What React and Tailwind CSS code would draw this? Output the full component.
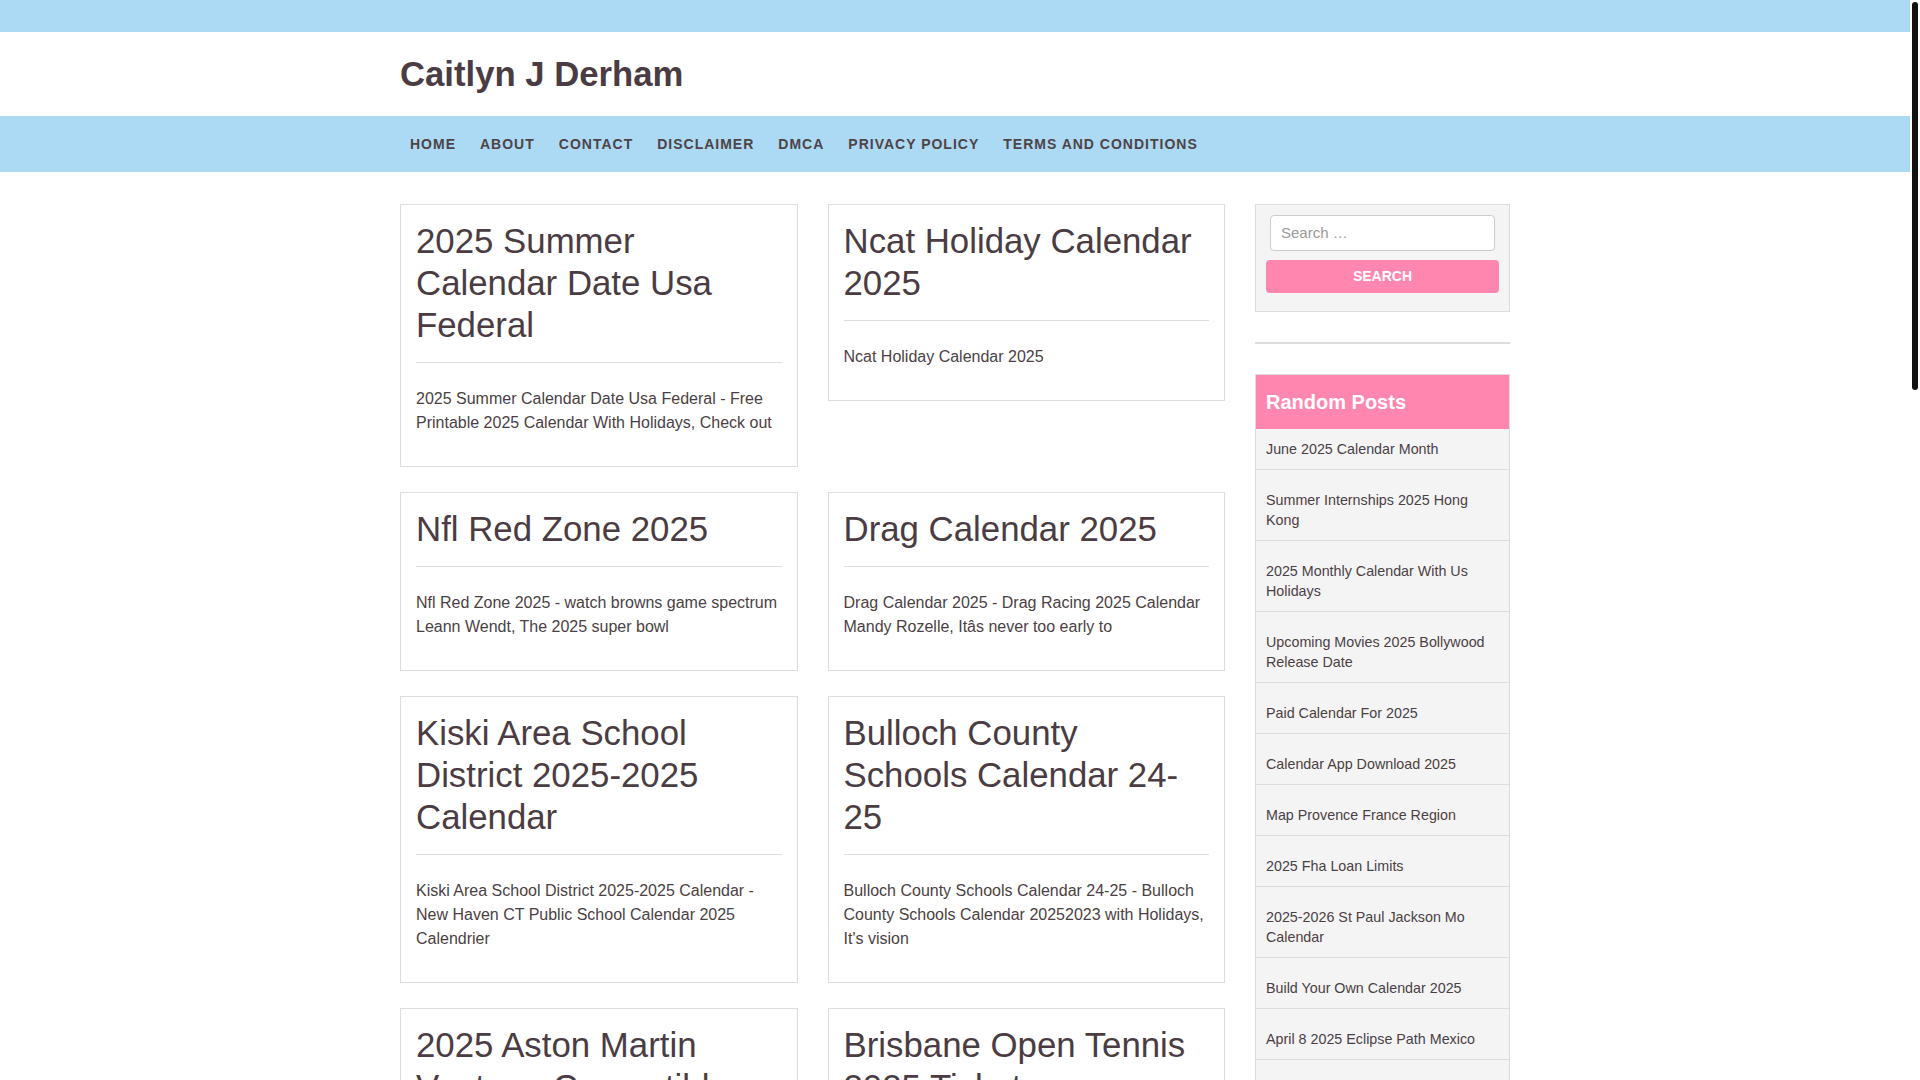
import React from "react";

const posts = [
  {
    t: "2025 Summer Calendar Date Usa Federal",
    e: "2025 Summer Calendar Date Usa Federal - Free Printable 2025 Calendar With Holidays, Check out",
  },
  { t: "Ncat Holiday Calendar 2025", e: "Ncat Holiday Calendar 2025" },
  {
    t: "Nfl Red Zone 2025",
    e: "Nfl Red Zone 2025 - watch browns game spectrum Leann Wendt, The 2025 super bowl",
  },
  {
    t: "Drag Calendar 2025",
    e: "Drag Calendar 2025 - Drag Racing 2025 Calendar Mandy Rozelle, Itâs never too early to",
  },
  {
    t: "Kiski Area School District 2025-2025 Calendar",
    e: "Kiski Area School District 2025-2025 Calendar - New Haven CT Public School Calendar 2025 Calendrier",
  },
  {
    t: "Bulloch County Schools Calendar 24-25",
    e: "Bulloch County Schools Calendar 24-25 - Bulloch County Schools Calendar 20252023 with Holidays, It's vision",
  },
  {
    t: "2025 Aston Martin Vantage Convertible",
    e: "2025 Aston Martin Vantage Convertible - Aston Martin Vantage Roadster 2025, Pictures, Information",
  },
  {
    t: "Brisbane Open Tennis 2025 Tickets",
    e: "Brisbane Open Tennis 2025 Tickets - Brisbane International 2025 Tickets, Dates and Schedule",
  },
  {
    t: "Printable 2025 Calendar With Holidays",
    e: "Printable 2025 Calendar With Holidays - Free Printable Calendar 2025 With Holidays",
  },
  { t: "Ucf Calendar Spring 2025", e: "Ucf Calendar Spring 2025 - Academic Calendar, Important Dates" },
  {
    t: "Lunar New Year 2025 Date",
    e: "Lunar New Year 2025 Date - Chinese New Year 2025, Year of the Snake",
  },
  {
    t: "Easter Sunday 2025 Calendar",
    e: "Easter Sunday 2025 Calendar - When Is Easter 2025, Holy Week Dates",
  },
  {
    t: "Nba Draft 2025 Mock",
    e: "Nba Draft 2025 Mock - Early Projections for the Top Picks",
  },
  {
    t: "Federal Pay Period Calendar 2025",
    e: "Federal Pay Period Calendar 2025 - Opm Pay Calendar 2025, Federal Holidays",
  },
  {
    t: "School Holidays 2025 Qld",
    e: "School Holidays 2025 Qld - Queensland School Terms and Holidays",
  },
  {
    t: "March Madness 2025 Schedule",
    e: "March Madness 2025 Schedule - Ncaa Tournament Dates and Locations",
  },
];

const randomPosts = [
  "June 2025 Calendar Month",
  "Summer Internships 2025 Hong Kong",
  "2025 Monthly Calendar With Us Holidays",
  "Upcoming Movies 2025 Bollywood Release Date",
  "Paid Calendar For 2025",
  "Calendar App Download 2025",
  "Map Provence France Region",
  "2025 Fha Loan Limits",
  "2025-2026 St Paul Jackson Mo Calendar",
  "Build Your Own Calendar 2025",
  "April 8 2025 Eclipse Path Mexico",
  "Chinese Calendar 2025 Baby Gender",
  "Yom Kippur 2025 Date",
];

const nav = [
  "HOME",
  "ABOUT",
  "CONTACT",
  "DISCLAIMER",
  "DMCA",
  "PRIVACY POLICY",
  "TERMS AND CONDITIONS",
];

function Card({ t, e }) {
  return (
    <article className="border border-[#dddddd] bg-white p-[15px]">
      <h2 className="text-[34.8px] leading-[42px] font-normal text-[#4a3c42]">{t}</h2>
      <hr className="mt-[16px] mb-[24px] border-0 border-t border-[#dddddd]" />
      <p className="mb-[16px] text-[16px] leading-[24px] text-[#4b3f44]">{e}</p>
    </article>
  );
}

export default function App() {
  return (
    <div className="flex h-screen bg-white font-['Liberation_Sans',Arial,sans-serif] text-[#4b3f44]">
      <div className="h-full min-w-0 flex-1 overflow-y-auto [scrollbar-width:none]">
        <div className="h-[32px] bg-[#acd9f3]" />
        <header className="bg-white">
          <div className="mx-auto flex h-[84px] max-w-[1140px] items-center px-[15px]">
            <h1 className="text-[34.7px] leading-[42px] font-bold text-[#4a3c42]">Caitlyn J Derham</h1>
          </div>
        </header>
        <nav className="bg-[#acd9f3]">
          <div className="mx-auto flex h-[56px] max-w-[1140px] items-center px-[15px]">
            <ul className="-ml-[2px] flex">
              {nav.map((n) => (
                <li key={n} className="px-[12px] text-[14px] font-bold tracking-[1px] text-[#4d4448]">
                  {n}
                </li>
              ))}
            </ul>
          </div>
        </nav>

        <div className="mx-auto flex max-w-[1140px] gap-[30px] px-[15px] pt-[32px]">
          <main className="w-[825px] shrink-0">
            <div className="grid grid-cols-2 items-start gap-x-[30px] gap-y-[25px]">
              {posts.map((p) => (
                <Card key={p.t} t={p.t} e={p.e} />
              ))}
            </div>
            <div className="mt-[25px] mb-[40px] flex gap-[8px] text-[14px]">
              <span className="border border-[#dddddd] px-[12px] py-[6px]">1</span>
              <span className="border border-[#dddddd] px-[12px] py-[6px]">2</span>
              <span className="border border-[#dddddd] px-[12px] py-[6px]">Next</span>
            </div>
          </main>

          <aside className="w-[255px] shrink-0">
            <div className="border border-[#dddddd] bg-[#f4f4f4] p-[10px] pb-[18px]">
              <div className="mx-[4px] flex h-[36px] items-center rounded-[4px] border border-[#cccccc] bg-white pl-[10px] text-[15px] text-[#9a9a9a]">
                Search …
              </div>
              <div className="mt-[9px] flex h-[33px] w-full items-center justify-center rounded-[4px] bg-[#ff86ae] text-[14px] font-bold text-white">
                SEARCH
              </div>
            </div>
            <div className="my-[30px] h-[2px] bg-[#dddddd]" />
            <div className="border border-[#dddddd] bg-[#f4f4f4]">
              <h3 className="bg-[#ff86ae] py-[15px] pl-[10px] text-[20px] leading-[24px] font-bold text-white">
                Random Posts
              </h3>
              <ul>
                {randomPosts.map((r, i) => (
                  <li
                    key={r}
                    className={
                      (i === 0 ? "pt-[10px] " : "pt-[20px] ") +
                      "border-b border-[#dddddd] pr-[15px] pb-[10px] pl-[10px] text-[14.3px] leading-[20px] text-[#4b3f44]"
                    }
                  >
                    {r}
                  </li>
                ))}
              </ul>
            </div>
          </aside>
        </div>

        <footer className="bg-[#acd9f3]">
          <div className="mx-auto max-w-[1140px] px-[15px] py-[20px] text-[14px] text-[#4d4448]">
            Copyright © 2025 Caitlyn J Derham
          </div>
        </footer>
      </div>

      <div className="w-[10px] shrink-0 bg-white">
        <div className="mt-[2px] ml-[2px] h-[388px] w-[6px] rounded-full bg-[#111111]" />
      </div>
    </div>
  );
}
